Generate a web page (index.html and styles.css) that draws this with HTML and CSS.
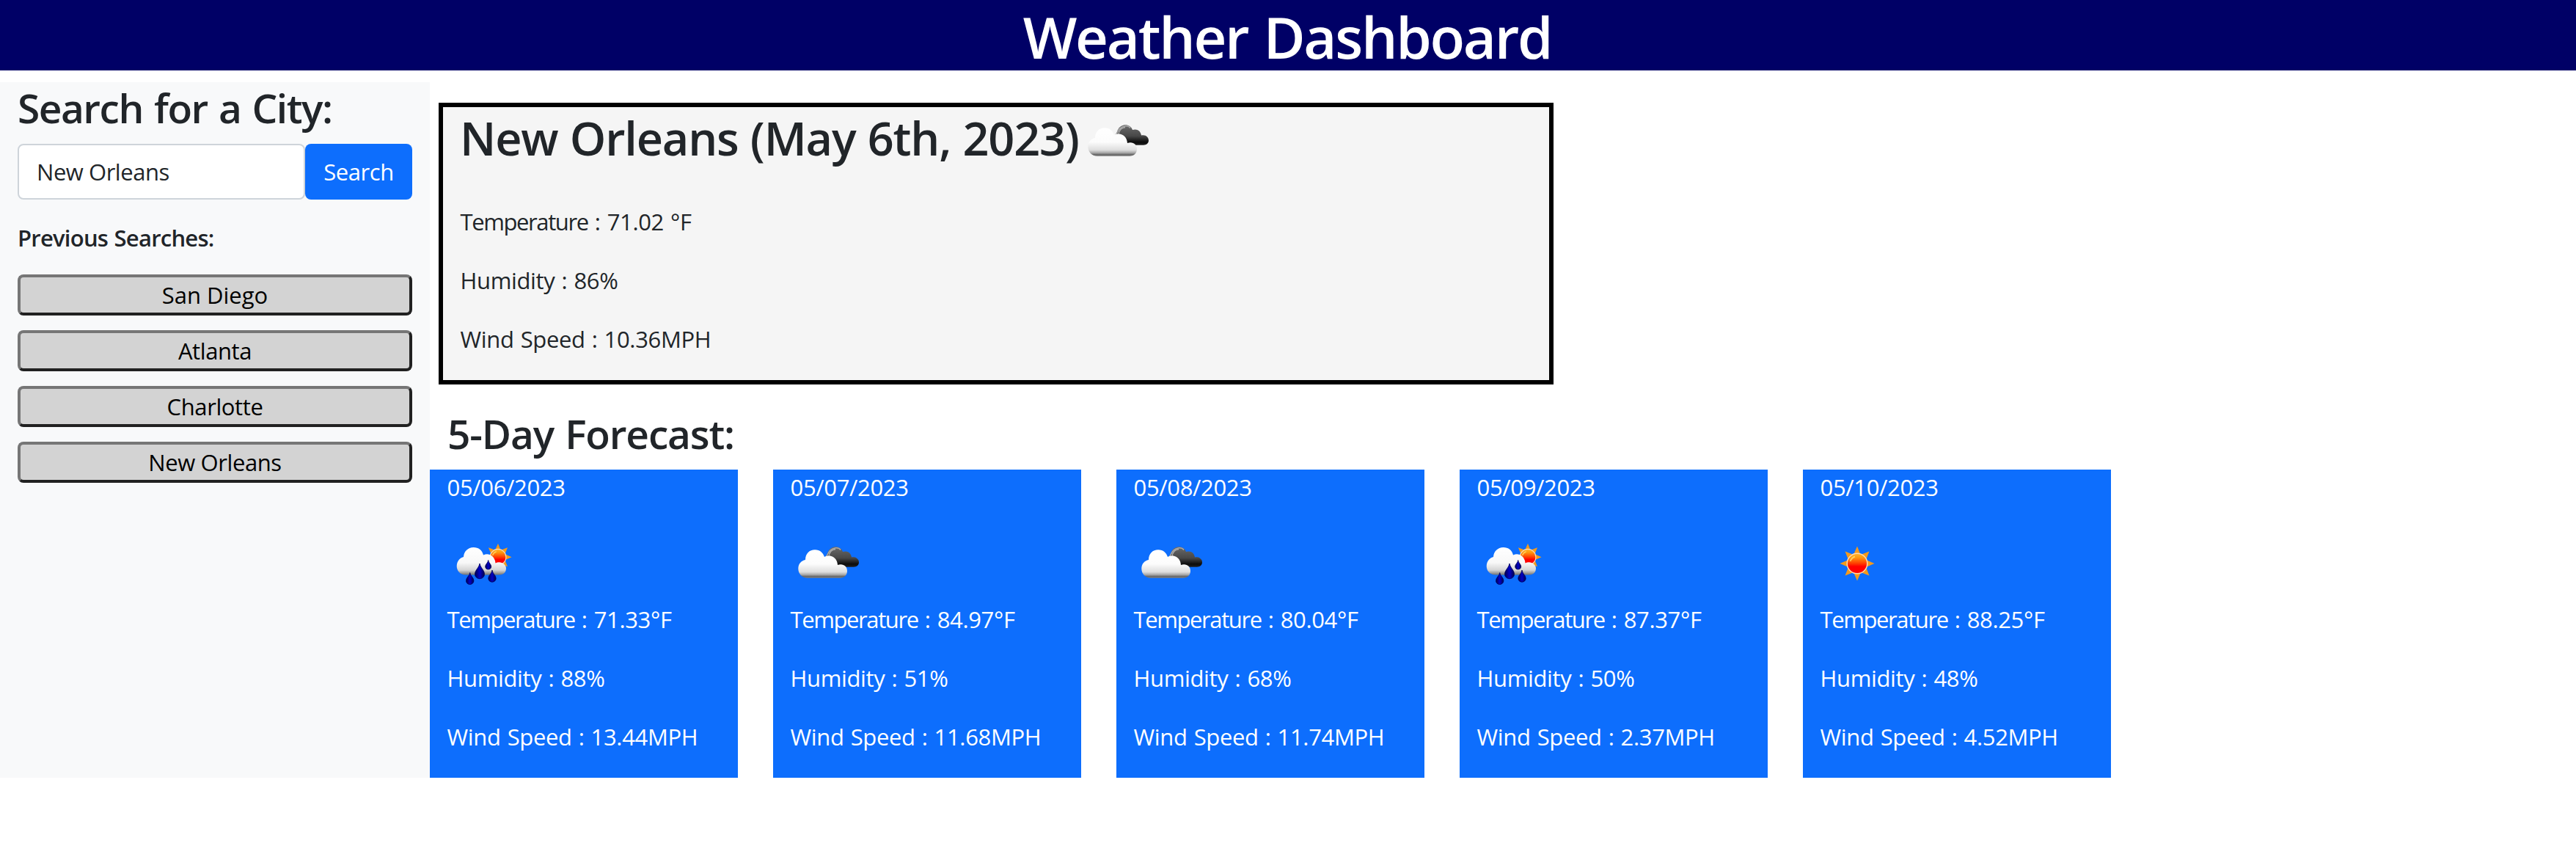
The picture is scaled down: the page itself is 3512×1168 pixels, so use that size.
FILE: index.html
```
<!DOCTYPE html>
<html lang="en">
<head>
<meta charset="utf-8">
<title>Weather Dashboard</title>
<link rel="stylesheet" href="styles.css">
</head>
<body>
<svg class="sprite" width="0" height="0" aria-hidden="true">
  <defs>
    <linearGradient id="white-cloud" gradientUnits="userSpaceOnUse" x1="0" y1="31" x2="0" y2="70">
      <stop offset="0" stop-color="#fff"/><stop offset=".5" stop-color="#fcfcfc"/><stop offset=".78" stop-color="#dedede"/><stop offset=".88" stop-color="#a8a8a8"/><stop offset=".94" stop-color="#686868"/><stop offset="1" stop-color="#808080"/>
    </linearGradient>
    <linearGradient id="dark-cloud" gradientUnits="userSpaceOnUse" x1="0" y1="27" x2="0" y2="55">
      <stop offset="0" stop-color="#6a6a6a"/><stop offset=".55" stop-color="#484848"/><stop offset=".85" stop-color="#0c0c0c"/><stop offset="1" stop-color="#222"/>
    </linearGradient>
    <linearGradient id="rain-cloud" gradientUnits="userSpaceOnUse" x1="0" y1="28" x2="0" y2="66">
      <stop offset="0" stop-color="#fff"/><stop offset=".55" stop-color="#f8f8f8"/><stop offset=".82" stop-color="#d4d4d4"/><stop offset="1" stop-color="#6c6c6c"/>
    </linearGradient>
    <linearGradient id="sun-core" x1="0" y1="0" x2="0" y2="1">
      <stop offset="0" stop-color="#ffb52a"/><stop offset=".2" stop-color="#ff9a10"/><stop offset=".5" stop-color="#ff3c00"/><stop offset=".65" stop-color="#f00"/><stop offset="1" stop-color="#f00"/>
    </linearGradient>
    <linearGradient id="drop-fill" x1="0" y1="0" x2="1" y2="0">
      <stop offset="0" stop-color="#00004c"/><stop offset=".5" stop-color="#0000c8"/><stop offset="1" stop-color="#00004c"/>
    </linearGradient>
    <symbol id="sun" viewBox="0 0 100 100">
      <path fill="#f49a1c" d="M50 26.5 54.5 38 66.5 33.5 62 45 73.500 50 62 55 66.500 66.500 55 62 50 73.500 45 62 33.500 66.500 38 55 26.500 50 38 45 33.500 33.500 45 38Z"/>
      <circle cx="50" cy="50" r="13.800" fill="url(#sun-core)" stroke="#fbd9b4" stroke-width="1.500"/>
      <path d="M40.500 47A10.500 10.500 0 0 1 47 40.500" fill="none" stroke="#ffe070" stroke-width="2" opacity=".75"/>
    </symbol>
    <symbol id="clouds" viewBox="0 0 100 100">
      <path fill="url(#dark-cloud)" d="M47 42C49 40 50 36 51 34C55 25 68 25 71 34C77 32 82 35 83 41.500C89 40 93 44 93 48.500C93 52 90 54.700 86 54.700H62L54 47Z"/>
      <path d="M47.500 41.500C51 39 51 30 61.500 28.800C65 28.500 67 30 68 31.500" fill="none" stroke="#a8a8a8" stroke-width="1.500"/>
      <path d="M52 40C53 34 56 31 61 30.500" fill="none" stroke="#d0d0d0" stroke-width="1.300" opacity=".7"/>
      <path fill="url(#white-cloud)" d="M23 69.700C15.500 69.700 10.300 64 10.300 57C10.300 50.500 14.500 46 20 45C20 36.500 25.500 31.300 33 31.300C40 31.300 44 35.500 46 41C55 36.500 63.500 42.500 64 52C71.500 49.500 77 54 77 60C77 66 73 69.700 67 69.700Z"/>
    </symbol>
    <symbol id="rain" viewBox="0 0 100 100">
      <use href="#sun" x="29.500" y="1.800" width="79" height="79"/>
      <path fill="url(#rain-cloud)" d="M25 65.500C17.500 65.500 12.700 60 12.700 53.500C12.700 47 17 42 22 41C22.500 33.500 28 28 35.500 28C42.500 28 47.500 32 49 38.500C57 34.500 65 40.500 65.500 49.500C72 46 80 50.500 80 56.500C80 62 76.500 65.500 71 65.500Z"/>
      <g fill="url(#drop-fill)" stroke="#000058" stroke-width=".8">
        <path d="M44 50C45 56 50.500 59 50.500 64.500C50.500 68 47.500 70.700 44 70.700S37.500 68 37.500 64.500C37.500 59 43 56 44 50Z"/>
        <path d="M55.700 45.500C56 49 59.700 51 59.700 54.200C59.700 56.500 58 58 55.700 58S51.700 56.500 51.700 54.200C51.700 51 55.400 49 55.700 45.500Z"/>
        <path d="M61 59C61.500 64 66.200 66 66.200 70.200C66.200 73 64 75.200 61 75.200S55.800 73 55.800 70.200C55.800 66 60.500 64 61 59Z"/>
        <path d="M30.700 62.500C31.200 67 35.900 69 35.900 73.500C35.900 76.300 33.700 78.500 30.700 78.500S25.500 76.300 25.500 73.500C25.500 69 30.200 67 30.700 62.500Z"/>
      </g>
    </symbol>
  </defs>
</svg>

<header class="banner"><h1 class="banner-title">Weather Dashboard</h1></header>

<main class="layout">
  <aside class="sidebar">
    <h2 class="sidebar-title">Search for a City:</h2>
    <form class="search">
      <input class="search-input" type="text" value="New Orleans" aria-label="City">
      <button class="search-button" type="button">Search</button>
    </form>
    <p class="history-title">Previous Searches:</p>
    <div class="history">
      <button class="history-item history-first" type="button">San Diego</button>
      <button class="history-item" type="button">Atlanta</button>
      <button class="history-item" type="button">Charlotte</button>
      <button class="history-item" type="button">New Orleans</button>
    </div>
  </aside>

  <div class="content">
    <section class="current">
      <div class="current-head">
        <h2 class="current-title">New Orleans (May 6th, 2023)</h2>
        <svg class="icon current-icon"><use href="#clouds"/></svg>
      </div>
      <div class="readings">
        <p class="reading"><span class="temp">Temperature</span> : 71.02 °F</p>
        <p class="reading">Humidity : 86%</p>
        <p class="reading">Wind Speed : 10.36MPH</p>
      </div>
    </section>

    <h2 class="forecast-title">5-Day Forecast:</h2>
    <section class="forecast">
      <article class="day">
        <p class="reading">05/06/2023</p>
        <svg class="icon"><use href="#rain"/></svg>
        <div class="readings">
          <p class="reading"><span class="temp">Temperature</span> : 71.33°F</p>
          <p class="reading">Humidity : 88%</p>
          <p class="reading">Wind Speed : 13.44MPH</p>
        </div>
      </article>
      <article class="day">
        <p class="reading">05/07/2023</p>
        <svg class="icon"><use href="#clouds"/></svg>
        <div class="readings">
          <p class="reading"><span class="temp">Temperature</span> : 84.97°F</p>
          <p class="reading">Humidity : 51%</p>
          <p class="reading">Wind Speed : 11.68MPH</p>
        </div>
      </article>
      <article class="day">
        <p class="reading">05/08/2023</p>
        <svg class="icon"><use href="#clouds"/></svg>
        <div class="readings">
          <p class="reading"><span class="temp">Temperature</span> : 80.04°F</p>
          <p class="reading">Humidity : 68%</p>
          <p class="reading">Wind Speed : 11.74MPH</p>
        </div>
      </article>
      <article class="day">
        <p class="reading">05/09/2023</p>
        <svg class="icon"><use href="#rain"/></svg>
        <div class="readings">
          <p class="reading"><span class="temp">Temperature</span> : 87.37°F</p>
          <p class="reading">Humidity : 50%</p>
          <p class="reading">Wind Speed : 2.37MPH</p>
        </div>
      </article>
      <article class="day">
        <p class="reading">05/10/2023</p>
        <svg class="icon"><use href="#sun"/></svg>
        <div class="readings">
          <p class="reading"><span class="temp">Temperature</span> : 88.25°F</p>
          <p class="reading">Humidity : 48%</p>
          <p class="reading">Wind Speed : 4.52MPH</p>
        </div>
      </article>
    </section>
  </div>
</main>
</body>
</html>
```
FILE: styles.css
```
* { box-sizing: border-box; }

body {
  margin: 0;
  background: #fff;
  color: #212529;
  font: 400 31px/48px "Open Sans", "Noto Sans", sans-serif;
}

h1, h2, p { margin: 0; font-weight: 600; }

.sprite { display: block; }

.banner {
  height: 96px;
  padding-top: 4px;
  background: #000066;
  color: #fff;
  text-align: center;
}

.banner-title {
  font-size: 78px;
  line-height: 92px;
  letter-spacing: -2.3px;
  word-spacing: 3px;
  text-indent: -2px;
}

.layout {
  display: flex;
  height: 948px;
  margin-top: 16px;
}

.sidebar {
  width: 586px;
  padding: 0 24px;
  background: #f8f9fa;
}

.sidebar-title {
  font-size: 55px;
  line-height: 70px;
  letter-spacing: -1.5px;
  word-spacing: 2.4px;
}

.search {
  display: flex;
  height: 76px;
  margin-top: 14px;
}

.search-input, .search-button {
  border-radius: 8px;
  font: inherit;
  letter-spacing: -.46px;
}

.search-input {
  width: 392px;
  padding: 0 24px;
  border: 2px solid #ced4da;
  background: #fff;
  color: #212529;
}

.search-button {
  flex: 1;
  padding: 0;
  border: 0;
  background: #0d6efd;
  color: #fff;
}

.history-title {
  margin-top: 28px;
  letter-spacing: -.75px;
  word-spacing: 1px;
}

.history {
  display: flex;
  flex-direction: column;
  gap: 20px;
  margin-top: 26px;
}

.history-item {
  height: 56px;
  padding: 0;
  border: 4px solid;
  border-color: #767676 #212121 #212121 #767676;
  border-radius: 8px;
  background: #d3d3d3;
  color: #000;
  font: inherit;
  letter-spacing: -.4px;
}

.history-first { letter-spacing: 0; }

.content { flex: 1; }

.current {
  width: 1520px;
  height: 384px;
  margin: 28px 0 0 12px;
  padding: 1px 24px 0;
  border: 6px solid #000;
  background: #f5f5f5;
}

.current-head {
  display: flex;
  height: 82px;
}

.current-title {
  font-size: 63px;
  line-height: 82px;
  letter-spacing: -1.15px;
  text-indent: -1px;
  word-spacing: 1px;
}

.icon {
  display: block;
  width: 100px;
  height: 100px;
}

.current-icon { margin: -4px 0 0 2px; }

.readings {
  display: flex;
  flex-direction: column;
  gap: 32px;
}

.current .readings { margin-top: 49px; }

.reading {
  font-weight: 400;
  letter-spacing: -.35px;
  word-spacing: 1.4px;
  text-indent: -.5px;
  white-space: nowrap;
}

.temp { letter-spacing: -1.4px; }

.forecast-title {
  margin: 33px 0 15px 24px;
  font-size: 55px;
  line-height: 68px;
  letter-spacing: -1.15px;
  word-spacing: 2px;
}

.forecast {
  display: flex;
  gap: 48px;
}

.day {
  width: 420px;
  height: 420px;
  padding: 0 24px;
  background: #0d6efd;
  color: #fff;
}

.day .icon { margin: 30px 0 2px; }
```
